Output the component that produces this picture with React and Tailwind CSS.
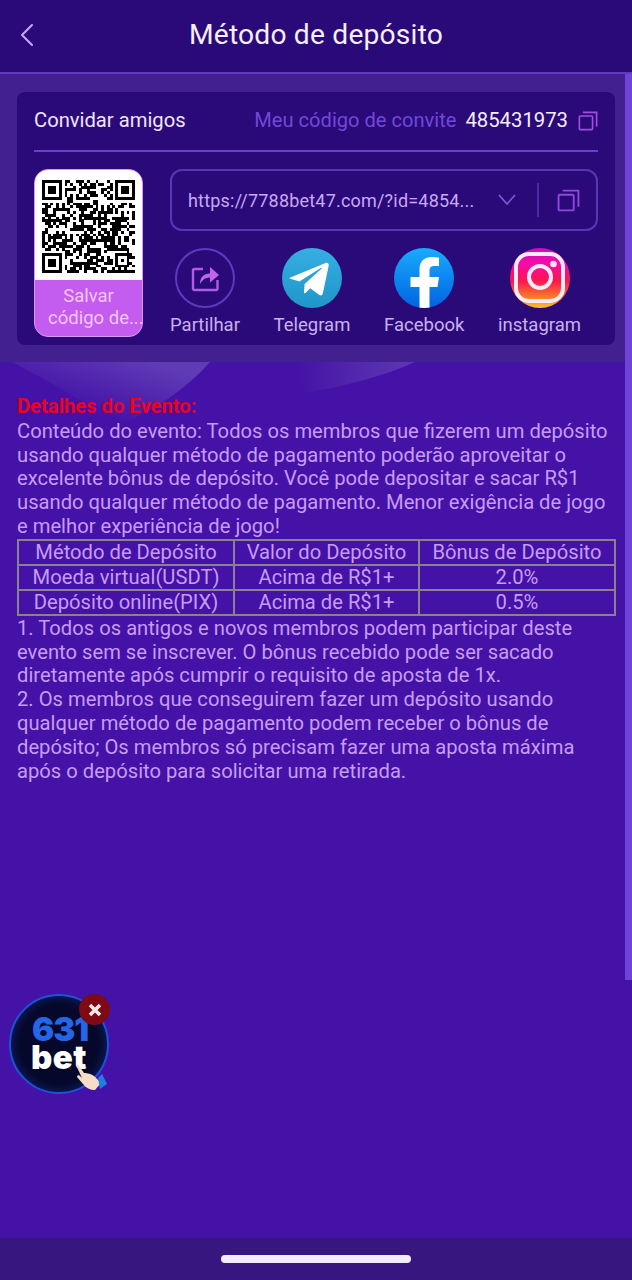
import React from "react";
import { ChevronLeft } from "lucide-react";

const CopyIcon = ({ size = 20, color = "#a54be0" }) => (
  <svg width={size} height={size} viewBox="0 0 22 22" fill="none" stroke={color} strokeWidth="1.8">
    <rect x="1.5" y="5.5" width="14.5" height="15" rx="1" />
    <path d="M5.5 1.5H20.5V17" />
  </svg>
);

function Qr() {
  const n = 33;
  const cells = [];
  let seed = 48543;
  const rnd = () => {
    seed = (seed * 1103515245 + 12345) & 0x7fffffff;
    return (seed >> 16) & 1;
  };
  const inFinder = (x, y) =>
    (x < 8 && y < 8) || (x >= n - 8 && y < 8) || (x < 8 && y >= n - 8) || (x >= n - 8 && x < n - 3 && y >= n - 8 && y < n - 3);
  for (let y = 0; y < n; y++) for (let x = 0; x < n; x++) {
    if (!inFinder(x, y) && rnd()) cells.push(<rect key={x + "-" + y} x={x} y={y} width="1.02" height="1.02" />);
  }
  const finder = (x, y) => (
    <g key={x + "f" + y}>
      <rect x={x} y={y} width="7" height="7" />
      <rect x={x + 1} y={y + 1} width="5" height="5" fill="#fff" />
      <rect x={x + 2} y={y + 2} width="3" height="3" />
    </g>
  );
  return (
    <svg width="93" height="93" viewBox="0 0 33 33" fill="#000" shapeRendering="crispEdges">
      {cells}
      {finder(0, 0)}
      {finder(26, 0)}
      {finder(0, 26)}
      <rect x="26" y="26" width="5" height="5" />
      <rect x="27" y="27" width="3" height="3" fill="#fff" />
      <rect x="28" y="28" width="1" height="1" />
    </svg>
  );
}

const ShareIcon = () => (
  <div className="w-[60px] h-[60px] rounded-full border-2 border-[#5f38c0] flex items-center justify-center">
    <svg width="32" height="32" viewBox="0 0 32 32" fill="none">
      <path d="M14 7H5.500A1.500 1.500 0 0 0 4 8.500V26.500A1.500 1.500 0 0 0 5.500 28H27A1.500 1.500 0 0 0 28.500 26.500V18" stroke="#b45ae8" strokeWidth="2.400" />
      <path d="M11 22C11 15 15 11.500 21 11.500V5L30 13L21 20.500V15.500C17 15.500 13.500 17.500 11 22Z" fill="#c264ee" />
    </svg>
  </div>
);

const TelegramIcon = () => (
  <svg width="60" height="60" viewBox="0 0 60 60">
    <defs>
      <linearGradient id="tg" x1="0.5" y1="0" x2="0.5" y2="1">
        <stop offset="0" stopColor="#37aee2" />
        <stop offset="1" stopColor="#1e96c8" />
      </linearGradient>
    </defs>
    <circle cx="30" cy="30" r="30" fill="url(#tg)" />
    <path d="M8.500 29.500L43.500 15C45.500 14.200 47.200 15.300 46.600 18L40.800 45.500C40.300 47.500 39 48 37.300 47L28.300 40.300L24 44.500C23.400 45 22.800 45.300 22 45.300L22.600 36L39.500 20.700C40.300 20 39.300 19.600 38.300 20.300L17.400 33.500L8.400 30.700C6.500 30.100 6.500 30.300 8.500 29.500Z" fill="#fff" />
  </svg>
);

const FacebookIcon = () => (
  <svg width="60" height="60" viewBox="0 0 60 60">
    <defs>
      <linearGradient id="fb" x1="0.5" y1="0" x2="0.5" y2="1">
        <stop offset="0" stopColor="#18acfe" />
        <stop offset="1" stopColor="#0163e0" />
      </linearGradient>
      <clipPath id="fbc"><circle cx="30" cy="30" r="30" /></clipPath>
    </defs>
    <circle cx="30" cy="30" r="30" fill="url(#fb)" />
    <path clipPath="url(#fbc)" d="M25.500 60V39H16.500V29H25.500V21.500C25.500 13 30.500 9 38 9C40.500 9 43 9.300 45 9.600V18H40.500C36.500 18 35.500 20 35.500 22.500V29H45L43.500 39H35.500V60Z" fill="#fff" />
  </svg>
);

const InstagramIcon = () => (
  <svg width="60" height="60" viewBox="0 0 60 60">
    <defs>
      <linearGradient id="ig" x1="0.5" y1="0" x2="0.5" y2="1">
        <stop offset="0" stopColor="#c70fc4" />
        <stop offset="0.25" stopColor="#f70aa8" />
        <stop offset="0.55" stopColor="#f9184f" />
        <stop offset="0.8" stopColor="#f9732a" />
        <stop offset="1" stopColor="#fdc028" />
      </linearGradient>
    </defs>
    <circle cx="30" cy="30" r="30" fill="url(#ig)" />
    <rect x="6" y="6" width="47" height="47" rx="13" fill="none" stroke="#ffe9f6" strokeWidth="4" />
    <circle cx="30" cy="29" r="11" fill="none" stroke="#ffe9f6" strokeWidth="4" />
    <circle cx="43.500" cy="16" r="3.300" fill="#ffe9f6" />
  </svg>
);

const Social = ({ label, children }) => (
  <div className="flex flex-col items-center">
    {children}
    <span className="mt-[5px] text-[18.5px] leading-[24px] text-[#cbb0f2] whitespace-nowrap">{label}</span>
  </div>
);

const FloatBadge = () => (
  <div className="absolute left-[9px] top-[994px] w-[101px] h-[101px]">
    <svg width="101" height="101" viewBox="0 0 101 101">
      <defs>
        <radialGradient id="bd" cx="0.5" cy="0.5" r="0.5">
          <stop offset="0.8" stopColor="#05082a" />
          <stop offset="1" stopColor="#0a1650" />
        </radialGradient>
      </defs>
      <circle cx="50" cy="50" r="49" fill="url(#bd)" stroke="#1b54d8" strokeWidth="2" />
    </svg>
    <span className="absolute left-[23px] top-[22px] text-[33px] leading-[27px] font-black text-[#2566e8] font-['Inter',sans-serif] tracking-[-1px]">631</span>
    <span className="absolute left-[22px] top-[50px] text-[33px] leading-[27px] font-black text-white font-['Inter',sans-serif] tracking-[0.5px]">bet</span>
    <svg className="absolute left-[65px] top-[70px]" width="34" height="28" viewBox="0 0 34 28">
      <path d="M2 1C4 0 5 1 6 3L10 9C15 9 20 11 23 15L27 19L21 26C16 26 12 24 9 20L3 13C3 11 5 11 6 12L8 14Z" fill="#f7dcc6" />
      <path d="M24 14L28 10L33 20L26 25Z" fill="#1f7fe0" />
    </svg>
    <div className="absolute left-[70px] top-[0px] w-[31px] h-[31px] rounded-full bg-[#7d0a14] flex items-center justify-center">
      <svg width="14" height="14" viewBox="0 0 14 14" stroke="#f4e8e8" strokeWidth="3.500"><path d="M2 2L12 12M12 2L2 12" /></svg>
    </div>
  </div>
);

const rows = [
  ["Método de Depósito", "Valor do Depósito", "Bônus de Depósito"],
  ["Moeda virtual(USDT)", "Acima de R$1+", "2.0%"],
  ["Depósito online(PIX)", "Acima de R$1+", "0.5%"],
];

export default function App() {
  return (
    <div className="relative w-[632px] h-[1280px] overflow-hidden bg-[#4412a6] font-['Roboto',sans-serif]">
      <header className="h-[74px] bg-[#2a0a78] border-b-2 border-[#6238c4] flex items-center justify-center relative">
        <ChevronLeft className="absolute left-[7px] top-[15px]" size={40} strokeWidth={1.2} color="#c9a8f5" />
        <h1 className="text-[28.2px] leading-[36px] text-[#f6eefe] font-normal tracking-[0.2px] -mt-[2px]">Método de depósito</h1>
      </header>

      <section className="relative h-[288px] bg-[#42208f] pt-[18px] pl-[17px]">
        <div className="w-[598px] h-[253px] rounded-[8px] bg-[#2a0a78] px-[17px]">
          <div className="h-[60px] flex items-center justify-between border-b-2 border-[#6a3fd0]">
            <span className="text-[20.2px] text-[#f1e6fd] -mt-[2px]">Convidar amigos</span>
            <div className="flex items-center -mt-[2px]">
              <span className="text-[20.1px] text-[#7148d8]">Meu código de convite</span>
              <span className="text-[20.3px] text-[#f6eefe] ml-[9px]">485431973</span>
              <span className="ml-[10px] mt-[2px]"><CopyIcon size={20} /></span>
            </div>
          </div>
          <div className="flex pt-[17px]">
            <div className="w-[109px] h-[168px] rounded-[14px] bg-[#c45cf0] overflow-hidden border border-[#d998f5]">
              <div className="h-[110px] bg-white flex items-center justify-center pt-[3px]"><Qr /></div>
              <div className="text-[18.5px] leading-[22px] text-[#f3c6fb] pt-[5px] whitespace-nowrap">
                <div className="text-center">Salvar</div>
                <div className="pl-[13px]">código de...</div>
              </div>
            </div>
            <div className="ml-[27px] w-[428px]">
              <div className="h-[62px] rounded-[12px] border-2 border-[#5a35b5] flex items-center pl-[16px]">
                <span className="text-[18px] text-[#c9a8f5] tracking-[0.2px] whitespace-nowrap w-[310px]">https://7788bet47.com/?id=4854...</span>
                <svg width="18" height="12" viewBox="0 0 18 12" fill="none" stroke="#7f5bd8" strokeWidth="1.600"><path d="M1 1L9 10L17 1" /></svg>
                <div className="ml-[21px] w-[2px] h-[34px] bg-[#4d2ba8]" />
                <span className="ml-[18px]"><CopyIcon size={23} color="#8e49d8" /></span>
              </div>
              <div className="flex mt-[17px] w-[411px] justify-between items-start">
                <Social label="Partilhar"><ShareIcon /></Social>
                <Social label="Telegram"><TelegramIcon /></Social>
                <Social label="Facebook"><FacebookIcon /></Social>
                <Social label="instagram"><InstagramIcon /></Social>
              </div>
            </div>
          </div>
        </div>
      </section>

      <div className="absolute left-0 top-[362px] w-[415px] h-[64px] overflow-hidden">
        <svg width="415" height="64" viewBox="0 0 415 64">
          <defs>
            <linearGradient id="d1" x1="0" y1="1" x2="1" y2="0">
              <stop offset="0.3" stopColor="#4412a6" />
              <stop offset="0.85" stopColor="#5f3bb6" />
            </linearGradient>
            <linearGradient id="d2" x1="0" y1="0" x2="1" y2="0">
              <stop offset="0" stopColor="#4412a6" />
              <stop offset="0.5" stopColor="#5227ad" />
              <stop offset="1" stopColor="#5c38b4" />
            </linearGradient>
          </defs>
          <path d="M12 0H210C185 28 155 48 118 64C95 45 50 20 12 0Z" fill="url(#d1)" />
          <path d="M295 0H415C385 14 345 24 305 31Z" fill="url(#d2)" />
        </svg>
      </div>

      <main className="relative px-[17px] pt-[33px] text-[20.2px] leading-[23.8px] text-[#c79cf6]">
        <div className="h-[24.8px] text-[#e8041c] font-bold">Detalhes do Evento:</div>
        <p className="w-[598px]">Conteúdo do evento: Todos os membros que fizerem um depósito usando qualquer método de pagamento poderão aproveitar o excelente bônus de depósito. Você pode depositar e sacar R$1 usando qualquer método de pagamento. Menor exigência de jogo e melhor experiência de jogo!</p>
        <table className="w-[597px] border-collapse border-2 border-[#8b8090] table-fixed">
          <colgroup>
            <col className="w-[216px]" />
            <col className="w-[185px]" />
            <col className="w-[196px]" />
          </colgroup>
          <tbody>
            {rows.map((r) => (
              <tr key={r[0]} className="h-[25px]">
                {r.map((c) => (
                  <td key={c} className="border-2 border-[#8b8090] text-center p-0 whitespace-nowrap leading-[22px]">{c}</td>
                ))}
              </tr>
            ))}
          </tbody>
        </table>
        <p className="mt-[1px] w-[598px]">1. Todos os antigos e novos membros podem participar deste evento sem se inscrever. O bônus recebido pode ser sacado diretamente após cumprir o requisito de aposta de 1x.</p>
        <p className="w-[598px]">2. Os membros que conseguirem fazer um depósito usando qualquer método de pagamento podem receber o bônus de depósito; Os membros só precisam fazer uma aposta máxima após o depósito para solicitar uma retirada.</p>
      </main>

      <div className="absolute right-0 top-[74px] w-[7px] h-[906px] bg-[#6f42d8]" />
      <FloatBadge />

      <div className="absolute left-0 bottom-0 w-full h-[42px] bg-[#37167f] flex justify-center pt-[17px]">
        <div className="w-[190px] h-[8px] rounded-full bg-[#f3ecfc]" />
      </div>
    </div>
  );
}
